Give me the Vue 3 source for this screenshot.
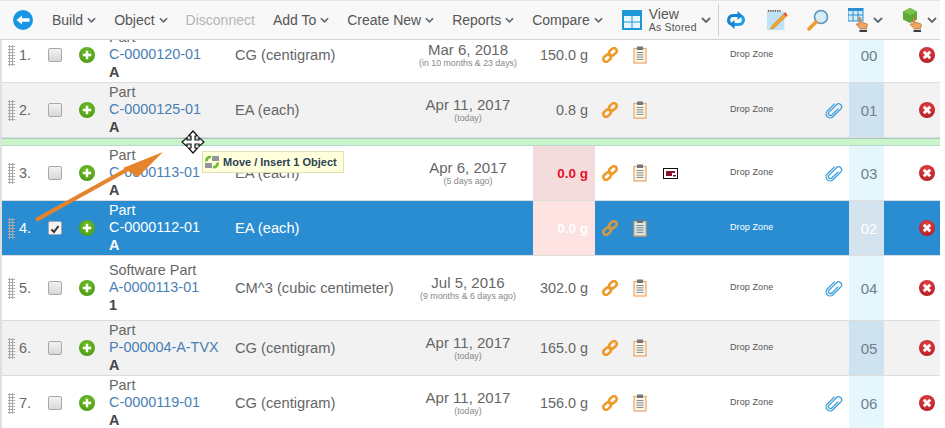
<template>
  <div class="page">
    <svg class="sprite" width="0" height="0">
      <defs>
        <radialGradient id="redball" cx=".5" cy=".35" r=".7">
          <stop offset="0" stop-color="#e8474a" />
          <stop offset="1" stop-color="#b01c22" />
        </radialGradient>
        <radialGradient id="greenball" cx=".5" cy=".35" r=".7">
          <stop offset="0" stop-color="#6fbf2a" />
          <stop offset="1" stop-color="#4a9a14" />
        </radialGradient>
        <symbol id="chain" viewBox="0 0 16 16">
          <g fill="none" stroke="#ee9a2c" stroke-width="2.6">
            <rect x="1" y="8.500" width="8" height="5.500" rx="2.700" transform="rotate(-42 5 11.200)" />
            <rect x="7" y="2" width="8" height="5.500" rx="2.700" transform="rotate(-42 11 4.800)" />
          </g>
        </symbol>
        <symbol id="board" viewBox="0 0 14 18">
          <rect x="1" y="2.500" width="12" height="14.500" fill="#fdf6e3" stroke="#e8a66a" stroke-width="1.200" />
          <rect x="4" y="0.500" width="6" height="3.500" fill="#6f7780" />
          <path d="M3.500 6.500h7M3.500 8.800h7M3.500 11.100h7M3.500 13.400h7" stroke="#7d8a96" stroke-width="1" />
        </symbol>
        <symbol id="clip" viewBox="0 0 18 18">
          <g transform="rotate(45 9 9)" fill="none" stroke="#3f9fdc" stroke-width="1.300">
            <path d="M11 5v9a2 2 0 0 1-4 0V3.500a3 3 0 0 1 6 0" />
            <path d="M5 4v10.500a4 4 0 0 0 8 0V3.500" />
          </g>
        </symbol>
        <symbol id="remove" viewBox="0 0 16 16">
          <circle cx="8" cy="8" r="8" fill="url(#redball)" />
          <path d="M4.800 4.800l6.400 6.400M11.200 4.800l-6.400 6.400" stroke="#fff" stroke-width="2.800" />
        </symbol>
        <symbol id="plus" viewBox="0 0 16 16">
          <circle cx="8" cy="8" r="8" fill="url(#greenball)" />
          <path d="M8 3.800v8.400M3.800 8h8.400" stroke="#fff" stroke-width="2.400" />
        </symbol>
        <symbol id="chev" viewBox="0 0 10 6">
          <path d="M1 1l4 4 4-4" fill="none" stroke="#5f6870" stroke-width="1.800" />
        </symbol>
        <symbol id="hand" viewBox="0 0 14 16">
          <path d="M4 1.500c1-.6 1.800 0 1.800 1v3.800l5.200 1.200c1 .3 1.500 1 1.300 2l-.8 3H5L1.500 8.800c-.5-.8.500-1.600 1.300-1L4 8.500z" fill="#f2a55e" stroke="#a8682e" stroke-width=".7" />
          <rect x="4.500" y="13.800" width="7.500" height="2.200" fill="#3c3c3c" />
        </symbol>
      </defs>
    </svg>

    <header class="toolbar">
      <svg class="back" viewBox="0 0 20 20" width="20" height="20">
        <circle cx="10" cy="10" r="10" fill="#1796e4" />
        <path d="M3.500 10 9 5.500V8.200h7.500v3.600H9v2.700z" fill="#fff" />
      </svg>
      <div class="menus">
        <span v-for="m in menus" :key="m.label" class="menu" :class="{ off: m.off }">
          {{ m.label }}
          <svg v-if="!m.off" width="9" height="6"><use href="#chev" /></svg>
        </span>
      </div>
      <div class="view">
        <svg viewBox="0 0 20 20" width="20" height="20">
          <rect width="20" height="20" fill="#1c98d8" />
          <rect x="2" y="6" width="7.500" height="5.500" fill="#e8f6fd" />
          <rect x="10.500" y="6" width="7.500" height="5.500" fill="#e8f6fd" />
          <rect x="2" y="12.500" width="7.500" height="5.500" fill="#e8f6fd" />
          <rect x="10.500" y="12.500" width="7.500" height="5.500" fill="#e8f6fd" />
        </svg>
        <div class="view-text">
          <span>View</span>
          <small>As Stored</small>
        </div>
        <svg width="10" height="6"><use href="#chev" /></svg>
      </div>
      <div class="tools">
        <svg viewBox="0 0 22 18" width="22" height="18">
          <path d="M16 4.500H8a4.500 4.500 0 0 0-2 8.500" fill="none" stroke="#1486d2" stroke-width="3" />
          <path d="M6 13.500h8a4.500 4.500 0 0 0 2-8.500" fill="none" stroke="#1aa0e8" stroke-width="3" />
          <path d="M12.500 0l5 4.500-5 4.500zM9.500 9l-5 4.500 5 4.500z" fill="#1486d2" />
        </svg>
        <svg viewBox="0 0 24 24" width="22" height="24">
          <rect x="1" y="3" width="19" height="20" fill="#bfe2f4" />
          <path d="M2 2h15" stroke="#555" stroke-width="2" stroke-dasharray="1.500 1" />
          <path d="M21 4 7 18l-2 4 4-1.500L23 7z" fill="#f5a623" stroke="#d07a18" stroke-width=".8" />
          <path d="M19 5.500l3 3 1.500-2-2.500-3z" fill="#e2583e" />
        </svg>
        <svg viewBox="0 0 22 22" width="22" height="22">
          <circle cx="14" cy="8" r="6.500" fill="#d6ecf8" stroke="#5f96b4" stroke-width="1.600" />
          <path d="M9 13 2 20" stroke="#f09a2c" stroke-width="3.600" stroke-linecap="round" />
        </svg>
        <span class="pick">
          <span class="pick-icon">
            <svg viewBox="0 0 16 14" width="16" height="14">
              <rect width="15" height="13" fill="#d4ebf8" stroke="#2a8fd4" />
              <path d="M0 1.500h15" stroke="#2a8fd4" stroke-width="3" />
              <path d="M5 3v10M10 3v10M0 7h15" stroke="#2a8fd4" />
            </svg>
            <svg class="pick-hand" width="14" height="16"><use href="#hand" /></svg>
          </span>
          <svg width="10" height="6"><use href="#chev" /></svg>
        </span>
        <span class="pick">
          <span class="pick-icon">
            <svg viewBox="0 0 16 16" width="16" height="16">
              <path d="M8 0l7 3.500v8L8 15l-7-3.500v-8z" fill="#5fa83a" />
              <path d="M8 0l7 3.500L8 7 1 3.500z" fill="#7cc24e" />
            </svg>
            <svg class="pick-hand" width="14" height="16"><use href="#hand" /></svg>
          </span>
          <svg width="10" height="6"><use href="#chev" /></svg>
        </span>
      </div>
    </header>

    <div class="table">
      <div class="rows">
        <template v-for="r in rows" :key="r.n">
          <div class="row" :class="{ alt: r.alt, sel: r.sel, tall: r.tall }">
            <div class="c-num">
              <span class="grip"></span>
              <span>{{ r.n }}.</span>
            </div>
            <div class="c-check">
              <span class="box">
                <svg v-if="r.sel" viewBox="0 0 12 12" width="12" height="12">
                  <path d="M2.500 6.500 5 9l4.500-6" fill="none" stroke="#333" stroke-width="2" />
                </svg>
              </span>
            </div>
            <div class="c-plus"><svg width="16" height="16"><use href="#plus" /></svg></div>
            <div class="c-part">
              <span>{{ r.type }}</span>
              <a>{{ r.code }}</a>
              <b>{{ r.rev }}</b>
            </div>
            <div class="c-unit">{{ r.unit }}</div>
            <div class="c-date">
              <span>{{ r.date }}</span>
              <small>{{ r.ago }}</small>
            </div>
            <div class="c-mass" :class="{ zero: r.zero }">{{ r.mass }}</div>
            <div class="c-icon"><svg width="16" height="16"><use href="#chain" /></svg></div>
            <div class="c-icon"><svg width="14" height="18"><use href="#board" /></svg></div>
            <div class="c-icon">
              <svg v-if="r.flag" viewBox="0 0 15 11" width="15" height="11">
                <rect x=".5" y=".5" width="14" height="10" fill="#fff" stroke="#111" />
                <rect x="3" y="3" width="6" height="5" fill="#8c1230" />
                <path d="M9 3h3v2H9zM10 7h3v1.500h-3z" fill="#8c1230" />
              </svg>
            </div>
            <div class="c-drop">Drop Zone</div>
            <div class="c-clip">
              <svg v-if="r.clip" width="18" height="18"><use href="#clip" /></svg>
            </div>
            <div class="c-seq">{{ r.seq }}</div>
            <div class="c-del"><svg width="16" height="16"><use href="#remove" /></svg></div>
          </div>
          <div v-if="r.n === 2" class="dropline"></div>
        </template>
      </div>
    </div>

    <svg class="arrow" width="200" height="100" viewBox="0 0 200 100">
      <path d="M36 90 130 38" stroke="#e5842c" stroke-width="4" />
      <path d="M163 22 123 38 138 47z" fill="#e5842c" />
    </svg>

    <svg class="move" viewBox="0 0 24 24" width="24" height="24">
      <path d="M12 1l4.500 5H14v4h4V7.500l5 4.500-5 4.500V14h-4v4h2.500L12 23l-4.500-5H10v-4H6v2.500L1 12l5-4.500V10h4V6H7.500z" fill="#fff" stroke="#111" stroke-width="1.200" />
    </svg>

    <div class="tip">
      <svg viewBox="0 0 14 14" width="14" height="14">
        <path d="M0 6.500Q0 .5 6 .5V3Q3 3 2.500 6.500z" fill="#6dbb2e" />
        <rect x="7" y="1" width="7" height="5" fill="#8f979e" />
        <rect x="0" y="8" width="7" height="5" fill="#8f979e" />
        <path d="M14 7.500Q14 13.500 8 13.500V11Q11 11 11.500 7.500z" fill="#6dbb2e" />
      </svg>
      Move / Insert 1 Object
    </div>
  </div>
</template>

<script setup>
const menus = [
  { label: 'Build' },
  { label: 'Object' },
  { label: 'Disconnect', off: true },
  { label: 'Add To' },
  { label: 'Create New' },
  { label: 'Reports' },
  { label: 'Compare' },
]

const rows = [
  { n: 1, type: 'Part', code: 'C-0000120-01', rev: 'A', unit: 'CG (centigram)', date: 'Mar 6, 2018', ago: '(in 10 months & 23 days)', mass: '150.0 g', seq: '00' },
  { n: 2, alt: true, type: 'Part', code: 'C-0000125-01', rev: 'A', unit: 'EA (each)', date: 'Apr 11, 2017', ago: '(today)', mass: '0.8 g', seq: '01', clip: true },
  { n: 3, type: 'Part', code: 'C-0000113-01', rev: 'A', unit: 'EA (each)', date: 'Apr 6, 2017', ago: '(5 days ago)', mass: '0.0 g', zero: true, flag: true, seq: '03', clip: true },
  { n: 4, sel: true, type: 'Part', code: 'C-0000112-01', rev: 'A', unit: 'EA (each)', date: '', ago: '', mass: '0.0 g', zero: true, seq: '02' },
  { n: 5, tall: true, type: 'Software Part', code: 'A-0000113-01', rev: '1', unit: 'CM^3 (cubic centimeter)', date: 'Jul 5, 2016', ago: '(9 months & 6 days ago)', mass: '302.0 g', seq: '04', clip: true },
  { n: 6, alt: true, type: 'Part', code: 'P-000004-A-TVX', rev: 'A', unit: 'CG (centigram)', date: 'Apr 11, 2017', ago: '(today)', mass: '165.0 g', seq: '05' },
  { n: 7, type: 'Part', code: 'C-0000119-01', rev: 'A', unit: 'CG (centigram)', date: 'Apr 11, 2017', ago: '(today)', mass: '156.0 g', seq: '06', clip: true },
]
</script>

<style>
html, body {
  margin: 0;
  background: #fff;
  overflow: hidden;
}
</style>

<style scoped>
.page {
  position: relative;
  width: 940px;
  height: 428px;
  overflow: hidden;
  font-family: "Liberation Sans", Arial, sans-serif;
  color: #666;
}

.sprite {
  position: absolute;
}

.toolbar {
  height: 38px;
  display: flex;
  align-items: center;
  padding-left: 13px;
  background: #f8f8f8;
  border-top: 1px solid #e4e4e4;
  border-bottom: 1px solid #d4d4d4;
  white-space: nowrap;
}

.toolbar svg,
.menus,
.view,
.tools,
.pick {
  flex-shrink: 0;
}

.back {
  margin-right: 19px;
}

.menus {
  display: flex;
  gap: 18px;
}

.menu {
  display: flex;
  align-items: center;
  gap: 4px;
  font-size: 14px;
  color: #555;
}

.menu.off {
  color: #b5b5b5;
}

.view {
  display: flex;
  align-items: center;
  margin-left: 19px;
  width: 96px;
  height: 32px;
  border-right: 1px solid #d0d0d0;
}

.view-text {
  display: flex;
  flex-direction: column;
  margin-left: 7px;
  margin-right: 4px;
  font-size: 14px;
  line-height: 14px;
  color: #555;
}

.view-text small {
  font-size: 10.500px;
  line-height: 13px;
  letter-spacing: .2px;
}

.tools {
  display: flex;
  align-items: center;
  gap: 19px;
  margin-left: 6px;
}

.pick {
  display: flex;
  align-items: center;
  gap: 4px;
}

.pick-icon {
  position: relative;
  width: 21px;
  height: 24px;
}

.pick-hand {
  position: absolute;
  left: 7px;
  top: 8px;
}

.table {
  height: 388px;
  overflow: hidden;
  border-left: 2px solid #e0e0e0;
}

.rows {
  margin-top: -12px;
}

.row {
  display: grid;
  grid-template-columns: 38px 30px 35px 126px 174px 128px 62px 30px 30px 30px 140px 24px 35px 56px;
  height: 54px;
  border-bottom: 1px solid #dcdcdc;
  background: #fff;
  align-items: stretch;
  font-size: 14.400px;
}

.row > div {
  display: flex;
  align-items: center;
}

.row.tall {
  height: 64px;
}

.row.alt {
  background: #f2f2f2;
}

.row.sel {
  background: #2a8dd2;
  color: #fff;
}

.dropline {
  height: 6px;
  background: #c9f5c9;
  border-top: 1px solid #a5c9c5;
  border-bottom: 1px solid #b5d8d5;
}

.c-num {
  padding-left: 6px;
  gap: 4px;
}

.grip {
  width: 7px;
  height: 21px;
  background-image: radial-gradient(circle, #a9a9a9 1px, transparent 1.200px);
  background-size: 3px 3px;
}

.c-check {
  padding-left: 8px;
}

.box {
  width: 12px;
  height: 12px;
  display: block;
  border: 1px solid #a8a8a8;
  border-radius: 2px;
  background: linear-gradient(#f2f2f2, #d8d8d8);
}

.sel .box {
  background: #f4f4f4;
}

.c-plus {
  padding-left: 9px;
}

.row > .c-part {
  flex-direction: column;
  align-items: flex-start;
  justify-content: center;
  padding-left: 4px;
  line-height: 17.500px;
}

.c-part a {
  color: #4a7fb5;
}

.sel .c-part a {
  color: #fff;
}

.c-part b {
  color: #444;
}

.sel .c-part b {
  color: #fff;
}

.c-unit {
  padding-left: 4px;
  font-size: 14.700px;
}

.row > .c-date {
  flex-direction: column;
  justify-content: center;
  padding-right: 2px;
  font-size: 15px;
  line-height: 17px;
}

.c-date small {
  font-size: 8.800px;
  line-height: 11px;
  color: #888;
}

.row > .c-mass {
  justify-content: flex-end;
  padding-right: 7px;
}

.c-mass.zero {
  background: #f5dcdc;
  color: #e8102a;
  font-weight: bold;
  font-size: 13.500px;
}

.sel .c-mass.zero {
  background: #fde2e2;
  color: #fff;
}

.row > .c-icon {
  justify-content: center;
}

.sel .c-icon svg {
  opacity: .85;
}

.row > .c-drop {
  padding-left: 45px;
  padding-bottom: 2px;
  font-size: 9px;
  letter-spacing: .1px;
  color: #555;
}

.row.sel > .c-drop {
  color: #fff;
}

.row > .c-seq {
  justify-content: center;
  padding-left: 5px;
  background: #e6f6fd;
  font-size: 15px;
  color: #6f7f8c;
}

.row.alt > .c-seq {
  background: #cfe2ef;
}

.row.sel > .c-seq {
  background: #d5e3ee;
  color: #fff;
}

.c-del {
  padding-left: 35px;
}

.arrow {
  position: absolute;
  left: 0;
  top: 130px;
}

.move {
  position: absolute;
  left: 181px;
  top: 130px;
}

.tip {
  position: absolute;
  left: 202px;
  top: 151px;
  height: 20px;
  padding: 0 6px 0 2px;
  display: flex;
  align-items: center;
  gap: 4px;
  background: #ffffdc;
  border: 1px solid #e2e2b0;
  font-size: 11px;
  font-weight: bold;
  color: #2c4152;
  white-space: nowrap;
}
</style>
